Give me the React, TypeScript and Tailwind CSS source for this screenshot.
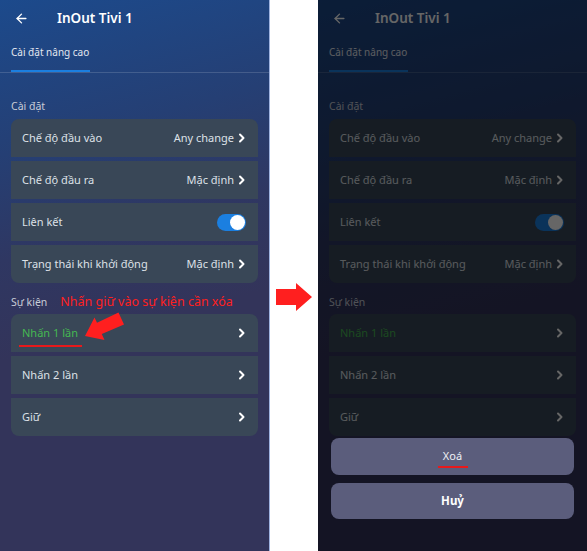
import { ArrowLeft } from 'lucide-react';

const font = { fontFamily: '"Noto Sans", "Liberation Sans", sans-serif' };

function Chevron() {
  return (
    <svg width="8" height="10" viewBox="0 0 8 10" className="shrink-0">
      <path d="M2 1.5 L5.5 5 L2 8.5" fill="none" stroke="#ffffff" strokeWidth="2" strokeLinecap="round" strokeLinejoin="round" />
    </svg>
  );
}

function Row({ label, value, first, last, green, underline, toggle }: {
  label: string;
  value?: string;
  first?: boolean;
  last?: boolean;
  green?: boolean;
  underline?: boolean;
  toggle?: boolean;
}) {
  return (
    <div
      className={`flex h-[38px] items-center justify-between bg-[#394757] pl-[11px] pr-[12px] ${first ? 'rounded-t-[8px]' : ''} ${last ? 'rounded-b-[8px]' : ''}`}
    >
      <span className={`relative text-[11px] ${green ? 'text-[#45b852]' : 'text-[#dde1e7]'}`}>
        {label}
        {underline && <span className="absolute left-[-3px] right-[-4px] top-[20px] h-[2px] bg-[#e8191b]" />}
      </span>
      {toggle ? (
        <span className="flex h-[17px] w-[29px] items-center justify-end rounded-full bg-[#1b7fe0] pr-[1px]">
          <span className="h-[15px] w-[15px] rounded-full bg-white" />
        </span>
      ) : (
        <span className="flex items-center gap-[4px] text-[11px] text-[#dde1e7]">
          {value}
          <Chevron />
        </span>
      )}
    </div>
  );
}

function Screen({ dim }: { dim?: boolean }) {
  return (
    <div className="relative h-full w-full overflow-hidden bg-[linear-gradient(165deg,#1c4a8c_0%,#253f74_25%,#2f3762_42%,#33345a_58%,#33345a_100%)]">
      <div className="flex h-[36px] items-center pl-[14px]">
        <ArrowLeft size={15} strokeWidth={2.2} className="text-white" />
        <span className="ml-[28px] text-[13.5px] font-semibold text-white">InOut Tivi 1</span>
      </div>
      <div className="border-b border-white/15">
        <div className="w-[79px] ml-[11px]">
          <div className="pt-[9px] text-[10px] leading-[14px] text-[#e3e7ef]">Cài đặt nâng cao</div>
          <div className="mt-[11px] h-[2px] bg-[#1b7fe0]" />
        </div>
      </div>
      <div className="px-[11px]">
        <div className="mt-[26px] text-[10.5px] leading-[14px] text-[#c8ccd6]">Cài đặt</div>
        <div className="mt-[6px] flex flex-col gap-[4px]">
          <Row label="Chế độ đầu vào" value="Any change" first />
          <Row label="Chế độ đầu ra" value="Mặc định" />
          <Row label="Liên kết" toggle />
          <Row label="Trạng thái khi khởi động" value="Mặc định" last />
        </div>
        <div className="mt-[12px] flex items-center gap-[13px] leading-[14px]">
          <span className="text-[10.5px] text-[#c8ccd6]">Sự kiện</span>
          {!dim && <span className="text-[12.5px] text-[#ff2020]">Nhấn giữ vào sự kiện cần xóa</span>}
        </div>
        <div className="mt-[5px] flex flex-col gap-[4px]">
          <Row label="Nhấn 1 lần" green underline={!dim} first />
          <Row label="Nhấn 2 lần" />
          <Row label="Giữ" last />
        </div>
      </div>
      {!dim && (
        <svg className="absolute left-0 top-0" width="270" height="551">
          <polygon
            points="85,336 104.5,340 101.8,334 124,324.5 118.5,312.5 97,322.8 94.5,317.5"
            fill="#ff1f1f"
          />
        </svg>
      )}
      {dim && (
        <>
          <div className="absolute inset-0 bg-[#000000]/60" />
          <div className="absolute inset-x-[13px] bottom-[32px] flex flex-col gap-[8px]">
            <button className="flex h-[37px] items-center justify-center rounded-[8px] bg-[#5b5d7c]">
              <span className="relative text-[11px] text-[#eef0f5]">
                Xoá
                <span className="absolute left-[-5px] right-[-6px] top-[18px] h-[2px] bg-[#e8191b]" />
              </span>
            </button>
            <button className="flex h-[36px] items-center justify-center rounded-[8px] bg-[#5b5d7c] text-[11.5px] font-bold text-white">
              Huỷ
            </button>
          </div>
        </>
      )}
    </div>
  );
}

export default function App() {
  return (
    <div className="flex h-[551px] w-[587px] bg-white" style={font}>
      <div className="h-full w-[270px] border-r border-[#9fb3e0]">
        <Screen />
      </div>
      <div className="flex w-[48px] justify-center">
        <svg width="38" height="28" viewBox="0 0 38 28" className="mt-[283px]">
          <polygon points="1,6 21,6 21,0 37,14 21,28 21,22 1,22" fill="#ff1f1f" />
        </svg>
      </div>
      <div className="h-full w-[269px]">
        <Screen dim />
      </div>
    </div>
  );
}
